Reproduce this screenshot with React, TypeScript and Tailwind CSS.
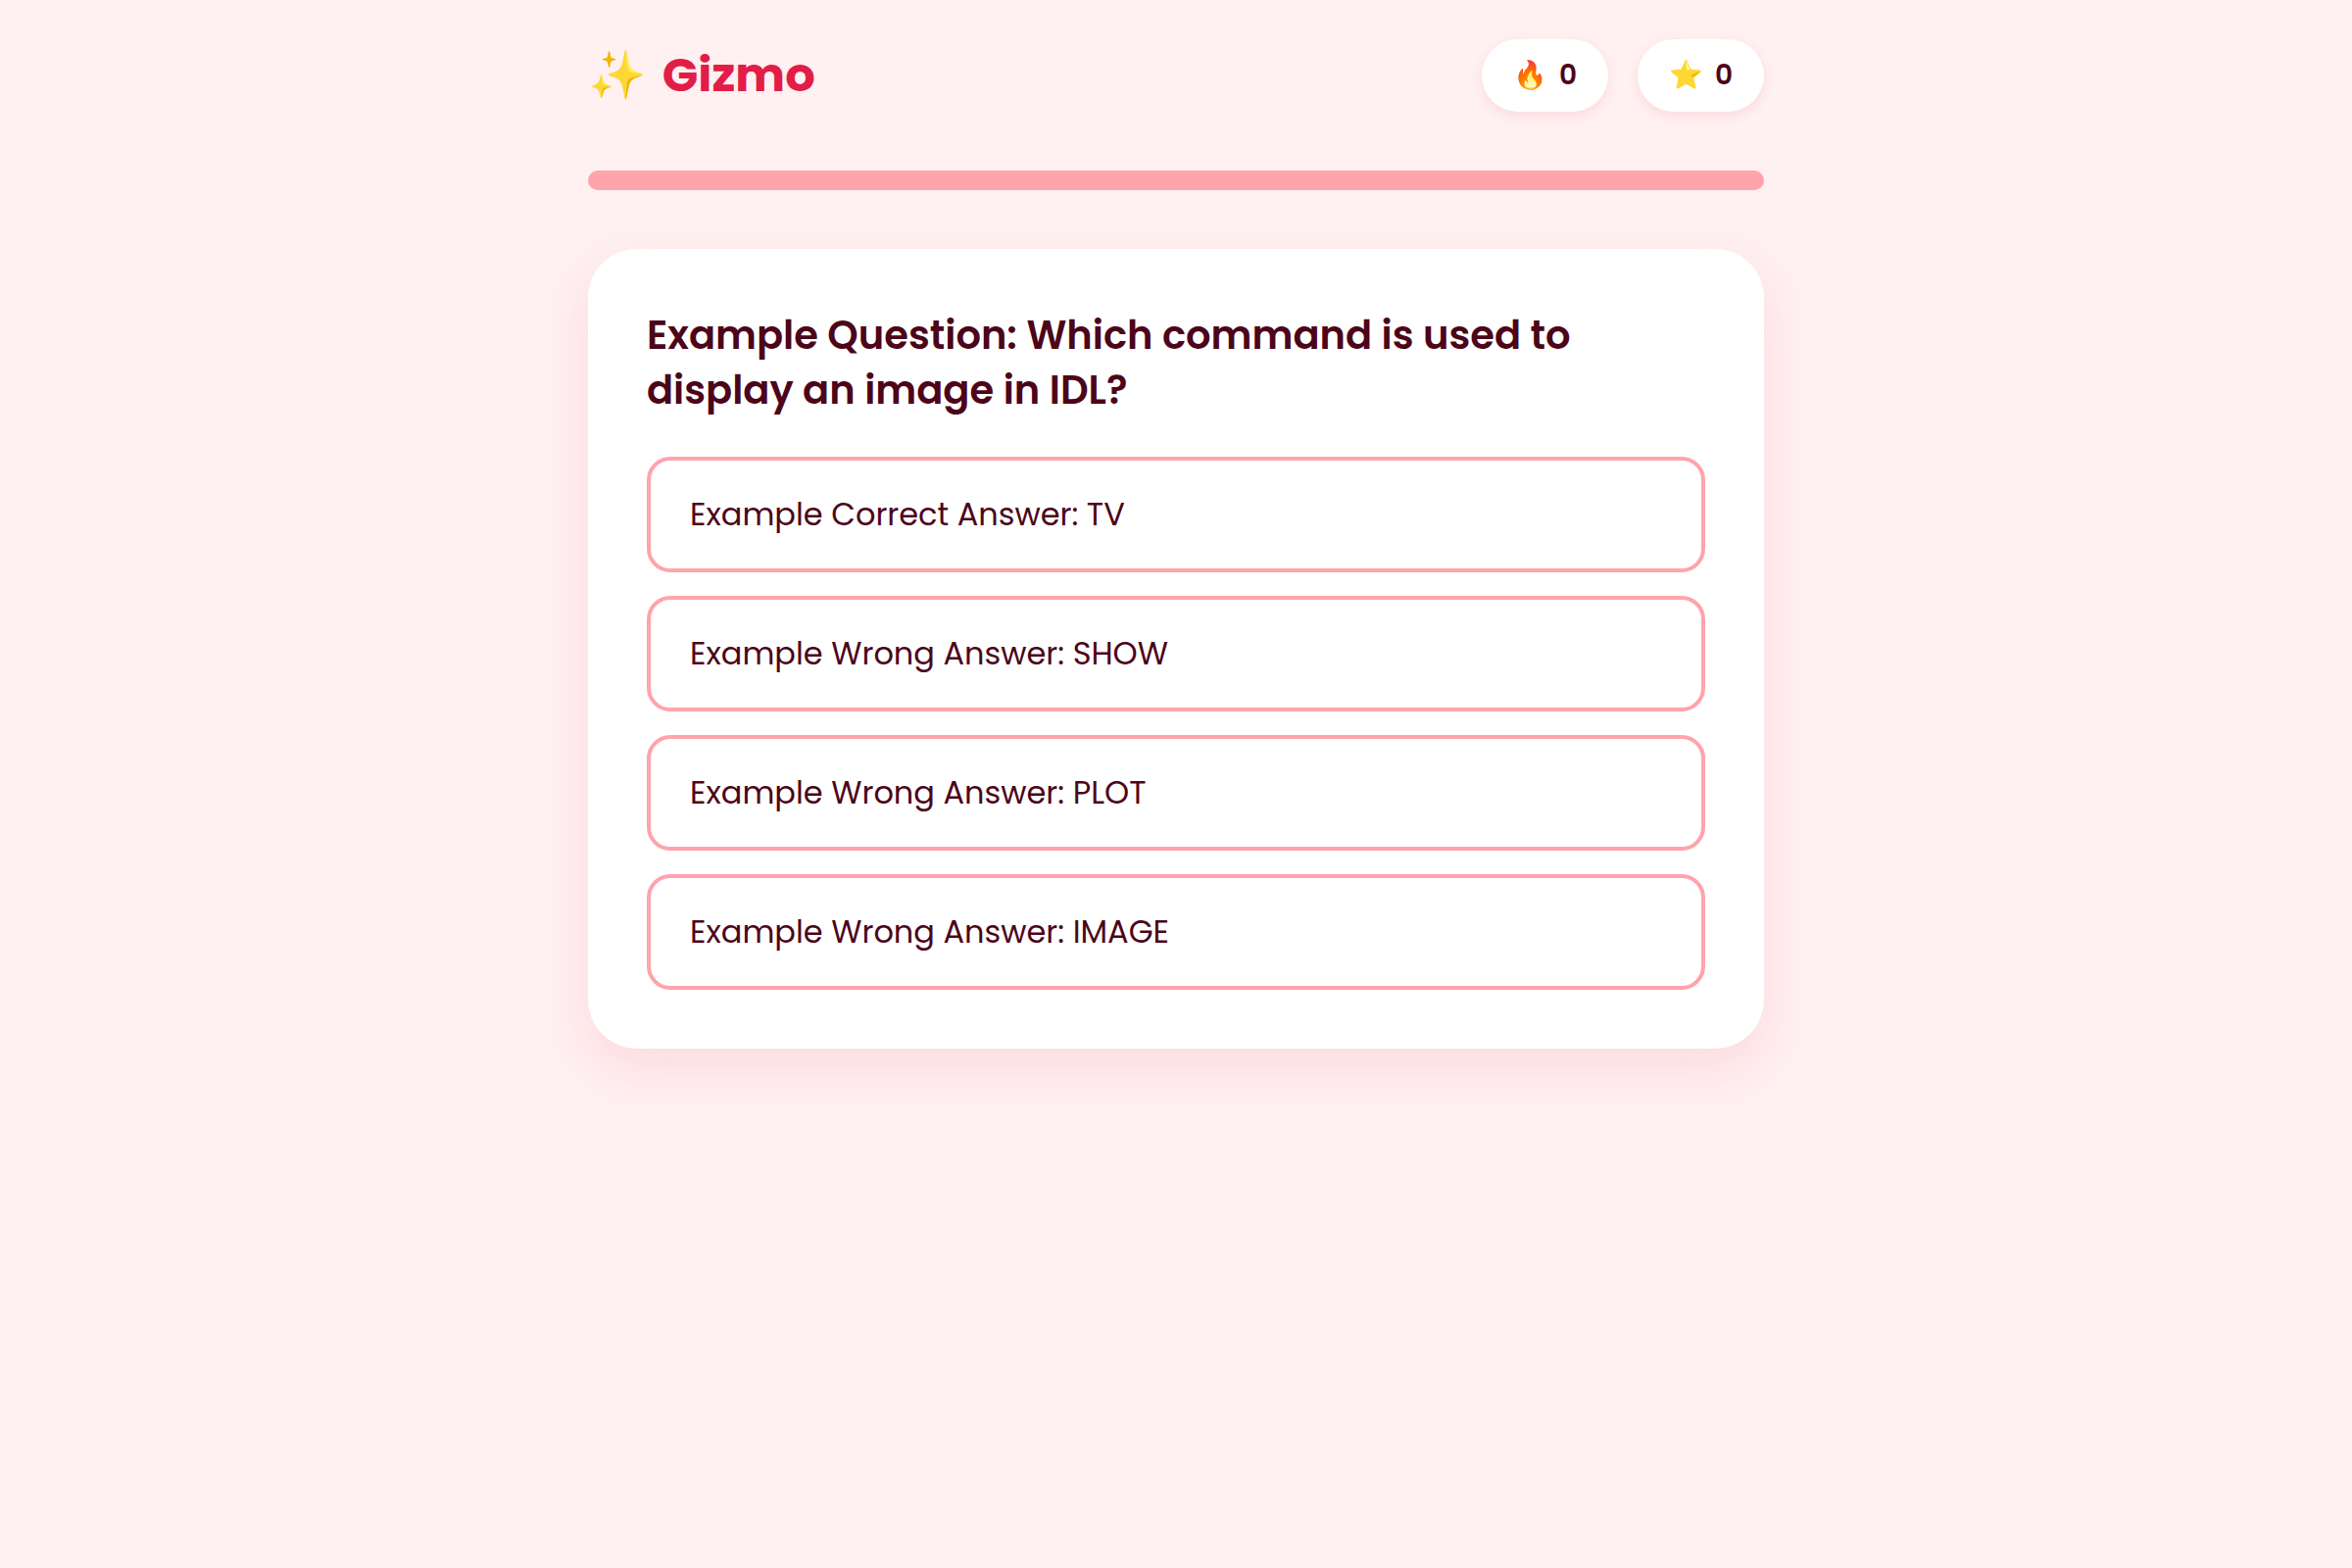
const answers = [
  'Example Correct Answer: TV',
  'Example Wrong Answer: SHOW',
  'Example Wrong Answer: PLOT',
  'Example Wrong Answer: IMAGE',
];

function Stat({ icon, label, value }: { icon: string; label: string; value: number }) {
  return (
    <div
      aria-label={label}
      className="flex items-center gap-3 rounded-full bg-white px-8 py-4 text-[28px] leading-[42px] font-semibold shadow-[0_4px_12px_rgba(225,29,72,0.1)]"
    >
      <span>{icon}</span>
      <span>{value}</span>
    </div>
  );
}

export default function App() {
  return (
    <div className="min-h-screen bg-[#fff0f1] px-10 py-10 font-[Poppins,Inter,'Noto_Color_Emoji',sans-serif] text-[#4c0519]">
      <div className="mx-auto flex max-w-[1200px] flex-col gap-15">
        <header className="flex items-center justify-between">
          <h1 className="flex items-center gap-4 text-5xl leading-[74px] font-bold text-[#e11d48]">
            <span>✨</span>
            <span>Gizmo</span>
          </h1>
          <div className="flex gap-[30px]">
            <Stat icon="🔥" label="Streak" value={0} />
            <Stat icon="⭐" label="Points" value={0} />
          </div>
        </header>
        <div role="progressbar" aria-label="Progress" aria-valuenow={0} className="h-5 rounded-full bg-[#ffa3ad]" />
        <main className="rounded-[50px] bg-white p-15 shadow-[0_20px_50px_rgba(225,29,72,0.1)]">
          <h2 className="text-[40px] leading-14 font-semibold">
            Example Question: Which command is used to display an image in IDL?
          </h2>
          <div className="mt-10 flex flex-col gap-6">
            {answers.map((answer) => (
              <button
                key={answer}
                type="button"
                className="rounded-3xl border-4 border-[#ffa3ad] bg-white px-10 py-[31px] text-left text-[32px] leading-12"
              >
                {answer}
              </button>
            ))}
          </div>
        </main>
      </div>
    </div>
  );
}
